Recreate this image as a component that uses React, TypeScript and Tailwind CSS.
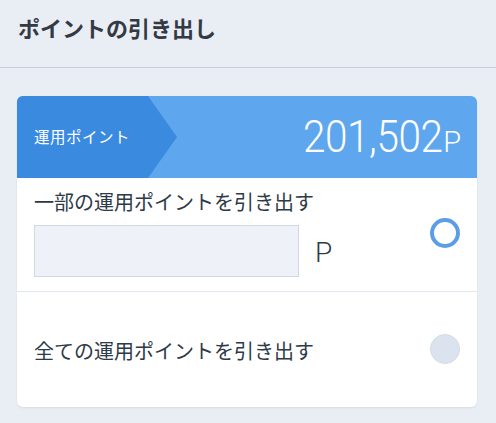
import React from 'react';

const jp = "font-['Noto_Sans_CJK_JP',sans-serif]";
const num = "font-['Roboto','Liberation_Sans',sans-serif]";

export default function App() {
  return (
    <div className={`min-h-[423px] w-[496px] bg-[#e9edf4] ${jp}`}>
      {/* Header */}
      <div className="h-[68px] border-b border-[#c9cfd8] pl-[18px] pt-[11px]">
        <h1 className="text-[22px] font-bold leading-[32px] text-[#333a44]">ポイントの引き出し</h1>
      </div>

      {/* Card */}
      <div className="ml-[17px] mt-[28px] w-[460px] overflow-hidden rounded-[6px] bg-white shadow-[0_1px_2px_rgba(0,0,0,0.08)]">
        {/* Points banner */}
        <div className="relative flex h-[82px] items-center justify-end bg-[#5ea7ef] pr-[16px]">
          <div className="absolute inset-y-0 left-0 flex w-[160px] items-center bg-[#3a8be0] pl-[17px] [clip-path:polygon(0_0,131px_0,160px_50%,131px_100%,0_100%)]">
            <span className="text-[15.5px] tracking-[0.5px] text-white">運用ポイント</span>
          </div>
          <div className={`relative flex items-baseline text-white ${num}`}>
            <span className="origin-right scale-x-[0.92] text-[44px] font-light leading-none tracking-[-0.5px]">201,502</span>
            <span className="ml-[1px] text-[29px] font-light leading-none">P</span>
          </div>
        </div>

        {/* Partial withdraw */}
        <div className="flex items-center border-b border-[#e1e6ee] pb-[14px] pl-[17px] pr-[17px] pt-[10px]">
          <div className="flex-1">
            <div className="text-[20px] leading-[28px] text-[#2d3a48]">一部の運用ポイントを引き出す</div>
            <div className="mt-[9px] flex items-center">
              <div className="h-[52px] w-[265px] border border-[#cfd8e3] bg-[#eef2f8]" />
              <span className={`ml-[16px] mt-[4px] text-[28px] font-light text-[#2d3a48] ${num}`}>P</span>
            </div>
          </div>
          <div className="h-[30px] w-[30px] rounded-full border-[4px] border-[#5b9de6] bg-white" />
        </div>

        {/* All withdraw */}
        <div className="flex h-[115px] items-center pl-[17px] pr-[17px]">
          <div className="flex-1 pt-[2px] text-[20px] leading-[28px] text-[#2d3a48]">全ての運用ポイントを引き出す</div>
          <div className="mb-[2px] h-[30px] w-[30px] rounded-full border border-[#d2dbe6] bg-[#dbe4ee]" />
        </div>
      </div>
    </div>
  );
}
